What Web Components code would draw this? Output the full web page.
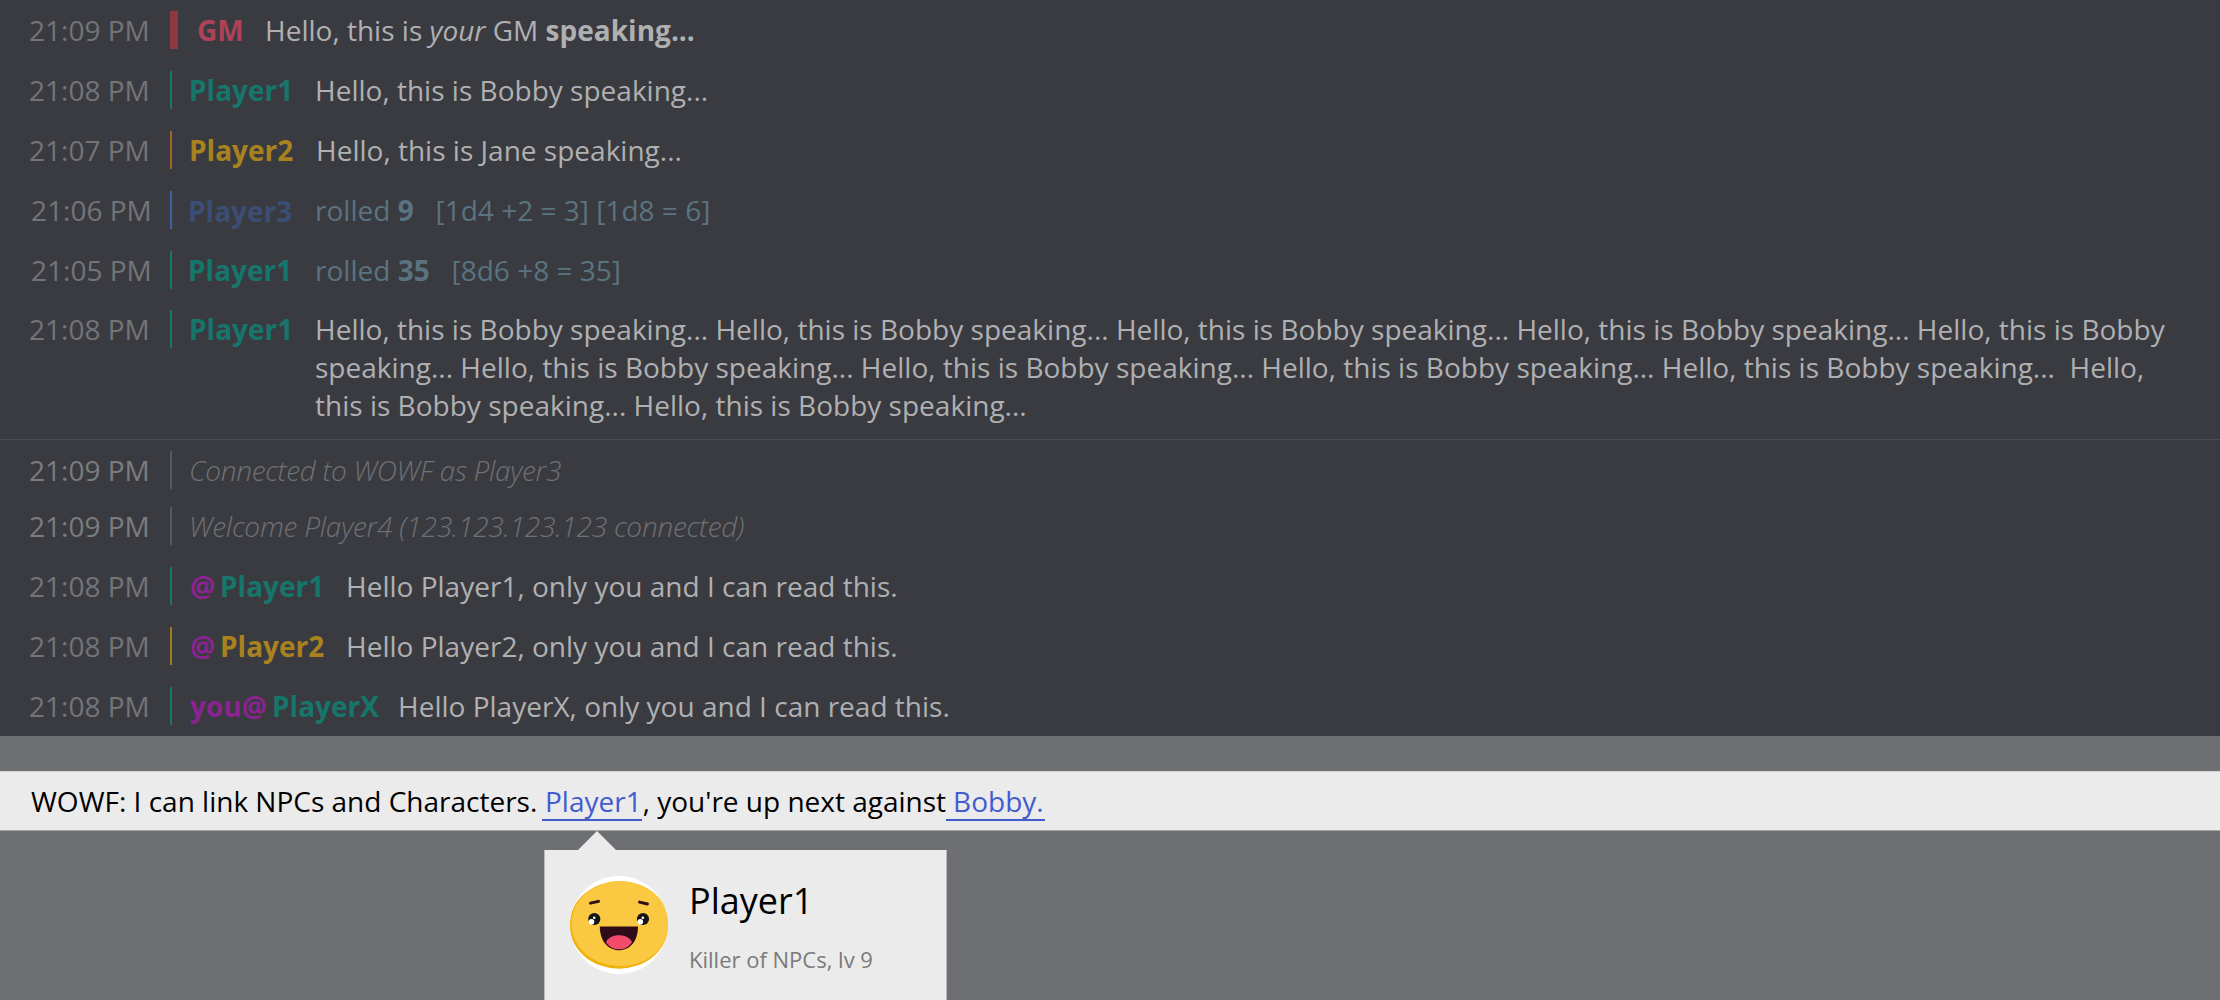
<!DOCTYPE html>
<html lang="en">
<head>
<meta charset="utf-8">
<title>WOWF chat</title>
<style>
html, body { margin: 0; height: 100%; overflow: hidden; }
body { background: #6e6f73; font: 28px/38px "Open Sans", "Noto Sans", sans-serif; }
</style>
</head>
<body>
<chat-app></chat-app>
<script>
const define = (name, html, setup) => customElements.define(name, class extends HTMLElement {
  constructor() {
    super();
    this.attachShadow({ mode: 'open' }).innerHTML = html;
  }
  connectedCallback() { if (setup) setup(this, this.shadowRoot); }
});

define('chat-row', `
<style>
:host { display: flex; height: 38px; color: #b0b0b2; --c: #16766c; --bar: var(--c); --barw: 2px; --tx: 29px; --ty: 0px; --nx: 189px; --mx: 315px; white-space: pre; }
.time { flex: 0 0 170px; box-sizing: border-box; padding-left: var(--tx); color: #747478; }
.bar { flex: 0 0 var(--barw); height: 38px; background: var(--bar); }
.name { flex: 0 0 calc(var(--mx) - var(--nx)); margin-left: calc(var(--nx) - 170px - var(--barw)); padding-top: var(--ty); color: var(--c); font-weight: 700; }
.msg { flex: none; letter-spacing: .01px; }
</style>
<div class="time"></div><div class="bar"></div>
<div class="name"><slot name="name"></slot></div><div class="msg"><slot></slot></div>`,
(el, root) => { root.querySelector('.time').append(el.getAttribute('time')); });

define('chat-notice', `
<style>
:host { display: flex; height: 38px; color: #707175; font-weight: 300; font-style: italic; letter-spacing: -.3px; }
.time { flex: 0 0 170px; box-sizing: border-box; padding-left: 29px; color: #7c7c7f; font-weight: 400; font-style: normal; letter-spacing: 0; }
.bar { flex: 0 0 2px; margin-right: 17px; background: #58595e; }
</style>
<div class="time"></div><div class="bar"></div><div><slot></slot></div>`,
(el, root) => { root.querySelector('.time').append(el.getAttribute('time')); });

define('smiley-avatar', `
<style>
:host { display: block; width: 98px; height: 98px; white-space: normal; }
svg { display: block; }
</style>
<svg width="98" height="98" viewBox="0 0 98 98">
<circle cx="49" cy="49" r="49" fill="#fff"/>
<clipPath id="c"><circle cx="49" cy="49" r="49"/></clipPath>
<g clip-path="url(#c)">
<ellipse cx="49" cy="49" rx="49.5" ry="43.7" fill="#efb10c"/>
<ellipse cx="50.2" cy="47.7" rx="48.8" ry="42.6" fill="#fbc841"/>
</g>
<path d="M20.5 27.2l8-1.9M69.5 26.1l8 1.9" stroke="#2e0d19" stroke-width="2.9" stroke-linecap="round"/>
<circle cx="24.3" cy="43" r="6.1" fill="#151515"/><circle cx="73" cy="43" r="6.1" fill="#151515"/>
<circle cx="21.5" cy="45.8" r="2.8" fill="#fff"/><circle cx="24.2" cy="41.8" r="1.3" fill="#fff"/>
<circle cx="70.3" cy="45.8" r="2.8" fill="#fff"/><circle cx="72.8" cy="41.8" r="1.3" fill="#fff"/>
<path d="M29.8 50.5H68C68 65 60 74.3 49 74.3S29.8 65 29.8 50.5Z" fill="#2e0d19"/>
<path d="M36 66.2C38 61.8 43 59.3 49 59.3S60 61.8 62 66.2C58.500 71.5 54 73.3 49 73.3S39.5 71.5 36 66.2Z" fill="#f24b69"/>
</svg>`);

define('player-card', `
<style>
:host { display: flex; position: absolute; left: 544px; top: 78px; width: 403px; height: 150px; box-sizing: border-box; padding: 26px 0 0 25px; background: #ebebeb; border: solid #b9b9bb; border-width: 0 1px; }
.tip { position: absolute; left: 33px; top: -19px; display: block; }
.text { margin-left: 21px; color: #000; }
.title { font-size: 36px; line-height: 49px; }
.sub { font-size: 22px; line-height: 30px; color: #7a7a7a; margin-top: 19px; }
</style>
<svg class="tip" width="38" height="19"><path d="M0 19L19 0L38 19Z" fill="#ebebeb"/></svg>
<smiley-avatar></smiley-avatar>
<div class="text"><div class="title"><slot name="title"></slot></div><div class="sub"><slot></slot></div></div>`);

define('player-link', `
<style>
:host { display: block; box-sizing: border-box; height: 39px; border-bottom: 2px solid #425cd0; color: #425cd0; white-space: normal; }
</style><slot></slot>`);

define('link-bar', `
<style>
:host { display: flex; position: relative; margin-top: 35px; height: 60px; box-sizing: border-box; padding: 10px 0 0 31px; background: #ebebeb; border-top: 1px solid #d5d5d5; border-bottom: 1px solid #a5a6a8; color: #000; white-space: pre; }
.a { flex: 0 0 511px; }
.b { flex: 0 0 304px; box-sizing: border-box; padding-left: 1px; }
player-link { flex: 0 0 99px; box-sizing: border-box; padding-left: 3px; }
player-link.second { padding-left: 7px; }
</style>
<div class="a">WOWF: I can link NPCs and Characters.</div><player-link>Player1</player-link><div class="b">, you're up next against</div><player-link class="second">Bobby.</player-link>
<player-card><span slot="title">Player1</span>Killer of NPCs, lv 9</player-card>`);

define('chat-app', `
<style>
:host { display: block; }
.log { height: 736px; box-sizing: border-box; padding-top: 11px; background: #3a3b40; }
chat-row { margin-bottom: 22px; }
.gm { --c: #ae4258; --bar: #8f393e; --barw: 8px; --nx: 197px; --mx: 265px; }
.gold { --c: #a8821f; --mx: 316px; }
.gold { --bar: #9b6b25; }
.blue { --c: #3b4e75; --bar: #40609f; --ty: 1px; }
.roll { --nx: 188px; --tx: 31px; --mx: 315px; color: #5a7380; }
.long { height: 114px; margin-bottom: 15px; }
.rule { height: 1px; background: #4a4b50; margin-bottom: 11px; }
chat-notice { margin-bottom: 18px; }
.welcome { letter-spacing: -.23px; }
.pm { --nx: 190px; --mx: 346px; }
.first { margin-top: 22px; }
.pm.gold { --bar: #9c7a22; }
.you { --mx: 398px; }
.at { color: #8b2390; display: inline-block; width: 30px; }
.you .at { width: 82px; }
</style>
<div class="log">
<chat-row class="gm" time="21:09 PM"><span slot="name">GM</span>Hello, this is <i>your</i> GM <b>speaking...</b></chat-row>
<chat-row time="21:08 PM"><span slot="name">Player1</span>Hello, this is Bobby speaking...</chat-row>
<chat-row class="gold" time="21:07 PM"><span slot="name">Player2</span>Hello, this is Jane speaking...</chat-row>
<chat-row class="roll blue" time="21:06 PM"><span slot="name">Player3</span>rolled <b>9</b>   [1d4 +2 = 3] [1d8 = 6]</chat-row>
<chat-row class="roll" time="21:05 PM" style="margin-bottom:21px"><span slot="name">Player1</span>rolled <b>35</b>   [8d6 +8 = 35]</chat-row>
<chat-row class="long" time="21:08 PM"><span slot="name">Player1</span>Hello, this is Bobby speaking... Hello, this is Bobby speaking... Hello, this is Bobby speaking... Hello, this is Bobby speaking... Hello, this is Bobby
speaking... Hello, this is Bobby speaking... Hello, this is Bobby speaking... Hello, this is Bobby speaking... Hello, this is Bobby speaking...  Hello,
this is Bobby speaking... Hello, this is Bobby speaking...</chat-row>
<div class="rule"></div>
<chat-notice time="21:09 PM">Connected to WOWF as Player3</chat-notice>
<chat-notice class="welcome" time="21:09 PM">Welcome Player4 (123.123.123.123 connected)</chat-notice>
<chat-row class="pm first" time="21:08 PM"><span slot="name"><span class="at">@</span>Player1</span>Hello Player1, only you and I can read this.</chat-row>
<chat-row class="pm gold" time="21:08 PM"><span slot="name"><span class="at">@</span>Player2</span>Hello Player2, only you and I can read this.</chat-row>
<chat-row class="pm you" time="21:08 PM"><span slot="name"><span class="at">you@</span>PlayerX</span>Hello PlayerX, only you and I can read this.</chat-row>
</div>
<link-bar></link-bar>`);
</script>
</body>
</html>
